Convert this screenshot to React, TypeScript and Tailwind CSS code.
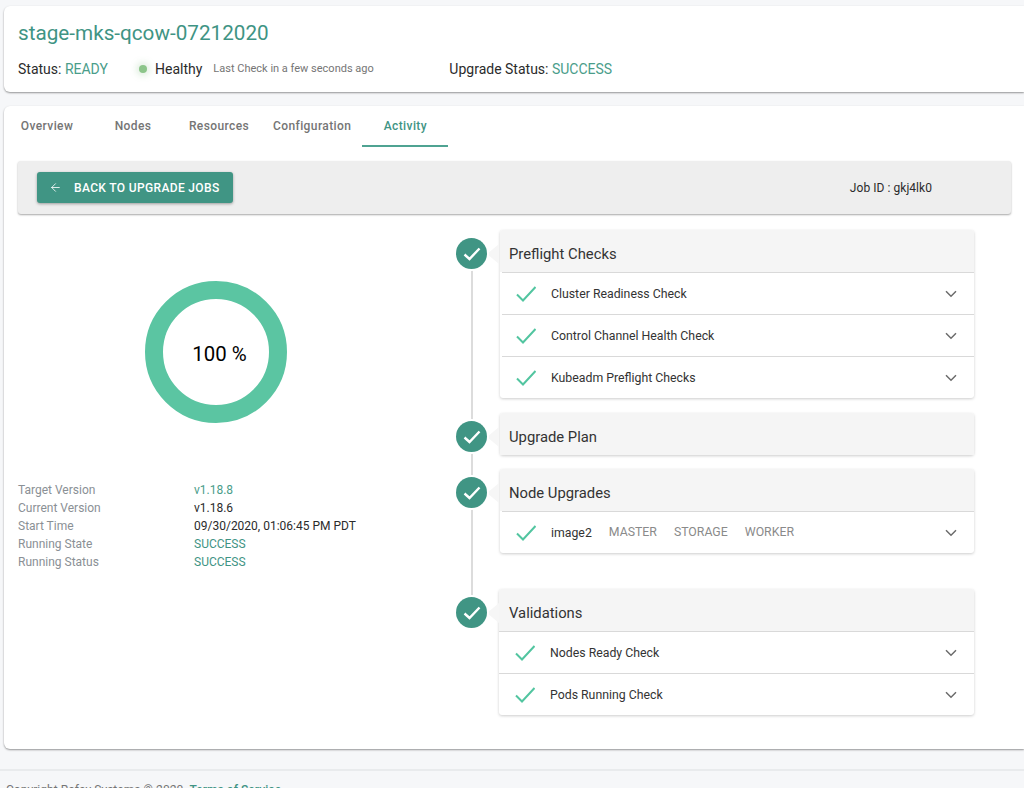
import { ArrowLeft } from "lucide-react";

const TABS = ["Overview", "Nodes", "Resources", "Configuration", "Activity"];

const INFO = [
    { label: "Target Version", value: "v1.18.8", color: "text-[#4a9d8a]" },
    { label: "Current Version", value: "v1.18.6", color: "text-[#2b2b2b]" },
    { label: "Start Time", value: "09/30/2020, 01:06:45 PM PDT", color: "text-[#2b2b2b]" },
    { label: "Running State", value: "SUCCESS", color: "text-[#3f9484]" },
    { label: "Running Status", value: "SUCCESS", color: "text-[#3f9484]" },
];

function GreenCheck() {
    return (
        <svg width="20" height="16" viewBox="0 0 20 16" fill="none" className="shrink-0">
            <path d="M1 8.5 L7 14.5 L19.5 1" stroke="#52c5a0" strokeWidth="2" />
        </svg>
    );
}

function Chevron() {
    return (
        <svg width="12" height="8" viewBox="0 0 12 8" fill="none" className="shrink-0">
            <path d="M1 1.2 L6 6.2 L11 1.2" stroke="#6b6b6b" strokeWidth="1.5" />
        </svg>
    );
}

function Row({ label, tags, shift }: { label: string; tags?: string[]; shift?: boolean }) {
    return (
        <div className={`${shift ? "ml-0" : "ml-[2px]"} h-[42px] border-t border-[#d9d9d9] flex items-center`}>
            <div className={shift ? "ml-[16px]" : "ml-[14px]"}><GreenCheck /></div>
            <span className="ml-[15px] pt-[1px] text-[12.3px] text-[#333]">{label}</span>
            {tags?.map((t) => (
                <span key={t} className="ml-[17px] text-[12.3px] text-[#8a8a8a]">{t}</span>
            ))}
            <div className="ml-auto mr-[17px] flex"><Chevron /></div>
        </div>
    );
}

function Step({ title, mt, rows, shift, tags }: { title: string; mt: string; rows?: string[]; shift?: boolean; tags?: string[] }) {
    return (
        <div className={`flex relative ${mt}`}>
            <div className="relative z-10 w-[31px] h-[31px] mt-[8px] rounded-full bg-[#409584] ring-2 ring-white flex items-center justify-center shrink-0">
                <svg width="18" height="14" viewBox="0 0 18 14" fill="none">
                    <path d="M1.5 7.5 L6.5 12 L16.5 1.5" stroke="#fff" strokeWidth="2.4" />
                </svg>
            </div>
            {/* little pointer between the dot and the card */}
            <div className="absolute left-[31px] top-[14px] w-0 h-0 border-y-[10px] border-y-transparent border-r-[12px] border-r-[#f6f6f6]"></div>
            <div className={`${shift ? "ml-[12px] w-[475px]" : "ml-[13px] w-[474px]"} bg-white rounded-[3px] shadow-[0_1px_3px_rgba(0,0,0,0.2)]`}>
                <div className={`h-[42px] bg-[#f5f5f5] rounded-t-[3px] flex items-center pt-[6px] text-[14.8px] text-[#333] ${shift ? "pl-[10px]" : "pl-[9px]"}`}>
                    {title}
                </div>
                {rows?.map((r) => <Row key={r} label={r} tags={tags} shift={shift} />)}
            </div>
        </div>
    );
}

export default function App() {
    return (
        <div className="h-[788px] overflow-hidden bg-[#f6f7f9] pt-[6px] font-['Roboto',sans-serif]">
            {/* Cluster header */}
            <div className="ml-[4px] h-[86px] bg-white rounded-l-[6px] shadow-[0_1px_2px_rgba(0,0,0,0.4)] pl-[14px] pt-[14px]">
                <div className="text-[20.7px] leading-[26px] text-[#3f9484]">stage-mks-qcow-07212020</div>
                <div className="mt-[14px] h-[18px] flex items-center text-[14px] text-[#2b2b2b]">
                    <span className="w-[121px]">Status: <span className="text-[#4a9d8a]">READY</span></span>
                    <span className="w-[8px] h-[8px] rounded-full bg-[#8cc58a] shadow-[0_0_6px_3px_rgba(140,197,138,0.25)]"></span>
                    <span className="ml-[8px]">Healthy</span>
                    <span className="ml-[11px] text-[11px] text-[#757575] w-[236px]">Last Check in a few seconds ago</span>
                    <span>Upgrade Status: <span className="text-[#4a9d8a]">SUCCESS</span></span>
                </div>
            </div>

            {/* Main card */}
            <div className="ml-[4px] mt-[14px] h-[643px] bg-white rounded-l-[6px] shadow-[0_1px_2px_rgba(0,0,0,0.4)]">
                <div className="flex h-[41px]">
                    {TABS.map((t) => (
                        <div
                            key={t}
                            className={`min-w-[86px] px-[11px] flex items-center justify-center text-[12px] font-medium tracking-[0.4px] border-b-2 ${
                                t === "Activity" ? "text-[#3f9484] border-[#4fa392]" : "text-[#757575] border-transparent"
                            }`}
                        >
                            {t}
                        </div>
                    ))}
                </div>

                <div className="ml-[14px] mr-[13px] mt-[14px] h-[53px] bg-[#eeeeee] rounded-[3px] shadow-[0_1px_2px_rgba(0,0,0,0.35)] flex items-center justify-between pl-[19px] pr-[79px]">
                    <button className="h-[31px] w-[196px] bg-[#409584] rounded-[3px] shadow-[0_1px_3px_rgba(0,0,0,0.35)] flex items-center pl-[12px] text-white text-[12px] font-medium tracking-[0.35px]">
                        <ArrowLeft size={13} strokeWidth={1.5} />
                        <span className="ml-[12px]">BACK TO UPGRADE JOBS</span>
                    </button>
                    <span className="text-[12px] tracking-[0.05px] text-[#2b2b2b]">Job ID : gkj4lk0</span>
                </div>

                <div className="flex mt-[16px] pl-[14px]">
                    <div className="w-[438px] shrink-0">
                        <div className="w-[396px] mt-[51px] flex justify-center">
                            <div className="relative w-[142px] h-[142px]">
                                <svg width="142" height="142" viewBox="0 0 142 142">
                                    <circle cx="71" cy="71" r="62" fill="none" stroke="#5bc5a2" strokeWidth="18" />
                                </svg>
                                <div className="absolute inset-0 flex items-center justify-center pl-[7px] pt-[4px] text-[20.4px] text-black">100 %</div>
                            </div>
                        </div>
                        <div className="mt-[58px] text-[12px] leading-[18px]">
                            {INFO.map((i) => (
                                <div key={i.label} className="flex">
                                    <span className="w-[176px] text-[#8a9095]">{i.label}</span>
                                    <span className={i.color}>{i.value}</span>
                                </div>
                            ))}
                        </div>
                    </div>

                    {/* Timeline */}
                    <div className="relative w-[518px]">
                        <div className="absolute left-[15px] top-[24px] w-[2px] h-[345px] bg-[#dcdcdc]"></div>
                        <Step title="Preflight Checks" mt="mt-0" rows={["Cluster Readiness Check", "Control Channel Health Check", "Kubeadm Preflight Checks"]} />
                        <Step title="Upgrade Plan" mt="mt-[15px]" />
                        <Step title="Node Upgrades" mt="mt-[14px]" rows={["image2"]} tags={["MASTER", "STORAGE", "WORKER"]} />
                        <Step title="Validations" mt="mt-[36px]" rows={["Nodes Ready Check", "Pods Running Check"]} shift />
                    </div>
                </div>
            </div>

            {/* Footer */}
            <div className="mt-[20px] border-t-2 border-[#e9ebed] pt-[10px] pl-[6px] text-[12px] leading-[18px] tracking-[0.05px] text-[#757575]">
                Copyright Rafay Systems © 2020. <span className="font-medium text-[#3f9484]">Terms of Service</span>
            </div>
        </div>
    );
}
